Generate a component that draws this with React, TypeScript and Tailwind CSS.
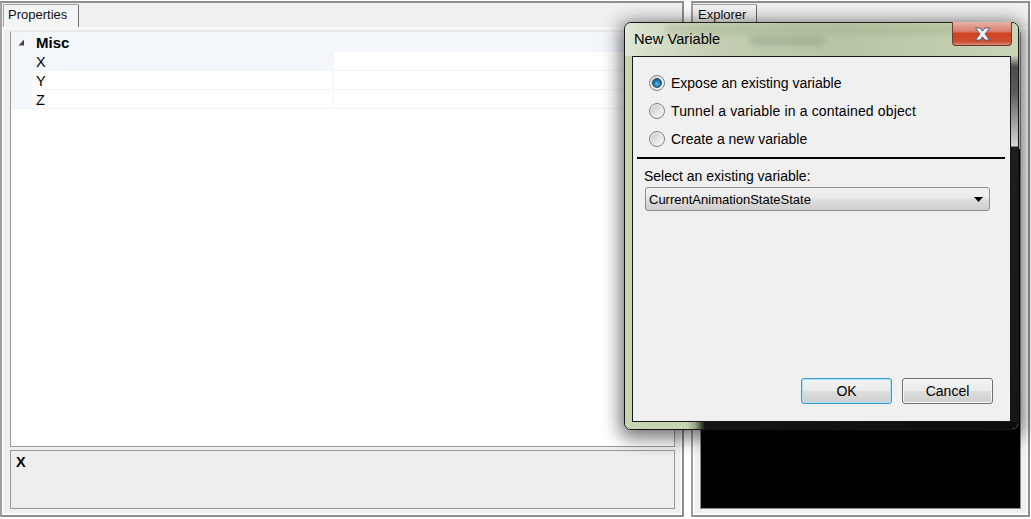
const FONT = "font-['Liberation_Sans',Arial,sans-serif]";

function TabHeader({ label, className }: { label: string; className: string }) {
  return (
    <div className={`flex h-[24px] items-start pt-[1px] ${className}`}>
      <div className="flex h-[23px] items-center rounded-t-[2px] border-t border-r border-l border-[#a0a0a0] border-r-[#6d6d6d] bg-[#f4f4f4] pb-[2px] text-[13px] text-[#111]">
        {label}
      </div>
    </div>
  );
}

function PropertyRow({ name, shaded }: { name: string; shaded?: boolean }) {
  return (
    <div className="flex h-[19px] border-b border-[#f3f5fa] bg-[#f3f6fb]">
      <div className="w-[21px] shrink-0" />
      <div
        className={`flex w-[302px] shrink-0 items-center border-r border-[#f3f5fa] pt-[4px] pl-[4px] text-[14.5px] text-black ${
          shaded ? "" : "bg-white"
        }`}
      >
        {name}
      </div>
      <div className="min-w-0 grow bg-white" />
    </div>
  );
}

function PropertiesPanel() {
  return (
    <section className="flex h-[516px] w-[684px] shrink-0 flex-col border-2 border-[#8f8f8f] border-l-[#a0a0a0] bg-[#f0f0f0]">
      <TabHeader label="Properties" className="pl-[1px] [&>div]:w-[76px] [&>div]:pl-[4px]" />
      <div className="flex min-h-0 grow flex-col border-2 border-t-2 border-[#fafafa] pt-[2px] pr-[5px] pb-[4px] pl-[6px]">
        <div className="flex min-h-0 grow flex-col border border-[#989898] border-t-[#e4e6ea] bg-white">
          <div className="flex h-[20px] items-center bg-[#f3f6fb] pt-[1px]">
            <svg viewBox="0 0 7 7" className="mr-[11px] ml-[7px] h-[7px] w-[7px]">
              <path d="M6 0.500v6H0.500z" fill="#444" />
            </svg>
            <span className="pt-[2px] text-[15px] font-bold text-black">Misc</span>
          </div>
          <PropertyRow name="X" shaded />
          <PropertyRow name="Y" />
          <PropertyRow name="Z" />
        </div>
        <div className="mt-[3px] h-[59px] shrink-0 border border-[#989898] bg-[#eeeeee] pt-[1px] pl-[5px] text-[14.5px] font-bold text-black">
          X
        </div>
      </div>
    </section>
  );
}

function ExplorerPanel() {
  return (
    <section className="ml-[7px] flex h-[516px] w-[339px] shrink-0 flex-col border-2 border-[#8f8f8f] border-l-[#a0a0a0] bg-[#f0f0f0]">
      <TabHeader label="Explorer" className="-ml-[1px] [&>div]:w-[65px] [&>div]:pl-[5px]" />
      <div className="flex min-h-0 grow flex-col border-2 border-[#fafafa] px-[5px] pt-[3px] pb-[4px]">
        <div className="flex grow flex-col border border-[#8c8c96] border-t-[#f0f0f0] bg-white">
          <div className="mt-[116px] grow bg-black" />
        </div>
      </div>
    </section>
  );
}

function Radio({ label, checked, className }: { label: string; checked?: boolean; className?: string }) {
  return (
    <label className="flex h-[16px] items-center text-[14px] text-black">
      <span className="flex h-[16px] w-[16px] shrink-0 items-center justify-center rounded-full border border-[#808080] bg-gradient-to-br from-[#c4c4c4] to-white shadow-[inset_0_0_0_1px_#f2f2f2]">
        {checked ? (
          <span className="h-[10px] w-[10px] rounded-full border border-[#23506e] bg-[radial-gradient(circle_at_50%_60%,#5cc6ee_0,#1c6fa0_55%,#134a70_100%)]" />
        ) : null}
      </span>
      <span className={`ml-[6px] ${className ?? ""}`}>{label}</span>
    </label>
  );
}

function DialogButton({ label, focused }: { label: string; focused?: boolean }) {
  return (
    <button
      type="button"
      className={`flex h-[26px] w-[91px] items-center justify-center rounded-[3px] border bg-[linear-gradient(to_bottom,#f4f4f4_0,#ebebeb_48%,#dddddd_52%,#cfcfcf_100%)] text-[14px] text-black ${
        focused ? "border-[#3c9ad0] shadow-[inset_0_0_0_1px_#a8e4f8]" : "border-[#707070] shadow-[inset_0_0_0_1px_#f8f8f8]"
      }`}
    >
      {label}
    </button>
  );
}

function NewVariableDialog() {
  return (
    <div className="absolute top-[22px] left-[624px] flex h-[408px] w-[395px] flex-col rounded-[7px] border border-[#161616] bg-[#c6d4b2] px-[7px] pb-[7px] shadow-[0_4px_18px_4px_rgba(0,0,0,0.55)]">
      {/* glass frame: what shows through it behind the client area */}
      <div className="absolute inset-x-0 top-0 h-[33px] rounded-t-[6px] bg-[linear-gradient(to_right,#dfe6d5_0,#c4cfb3_22%,#b8c5a5_55%,#c2cfae_85%,#c9d5b8_100%)]" />
      <div className="absolute inset-x-[40px] top-[2px] h-[9px] bg-[#9dac87] opacity-40 blur-[3px]" />
      <div className="absolute top-[14px] left-[125px] h-[8px] w-[75px] bg-[#6f7a62] opacity-30 blur-[3px]" />
      <div className="absolute top-[33px] right-0 bottom-[7px] w-[7px] bg-[linear-gradient(to_bottom,#c4d0b4_0,#4c4c48_3%,#5c5c5c_10%,#d4d4d4_24.500%,#1c2019_25%,#141612_100%)]" />
      <div className="absolute inset-x-0 bottom-0 h-[7px] rounded-b-[6px] bg-[linear-gradient(to_right,#c6d4b2_0,#c6d4b2_62px,#9aa88a_70px,#151515_80px,#0c0c0c_100%)]" />
      <div className="relative flex h-[33px] shrink-0 items-center pl-[2px]">
        <span className="text-[14.7px] text-black">New Variable</span>
        <div className="absolute top-[-1px] right-[-1px] flex h-[24px] w-[60px] items-center justify-center rounded-b-[4px] border border-t-0 border-[#6e3a33] bg-[linear-gradient(to_bottom,#e8b0a6_0,#d8806e_40%,#d2431f_50%,#c9502f_85%,#dd8a78_100%)]">
          <svg viewBox="0 0 17 14" className="h-[14px] w-[17px]">
            <path d="M1.500 1h4.600L8.500 4.200 10.900 1h4.600L11 7l4.500 6h-4.600L8.500 9.800 6.100 13H1.500L6 7z" fill="#f2f3f6" stroke="#4d5670" strokeWidth="0.9" />
          </svg>
        </div>
      </div>
      <div className="relative flex min-h-0 grow flex-col border border-[#161616] bg-[#f0f0f0]">
        <div className="flex flex-col gap-[12px] pt-[18px] pl-[16px]">
          <Radio label="Expose an existing variable" checked />
          <Radio label="Tunnel a variable in a contained object" className="tracking-[0.15px]" />
          <Radio label="Create a new variable" />
        </div>
        <div className="mt-[10px] mr-[5px] ml-[4px] h-[2px] bg-black" />
        <div className="mt-[10px] pl-[11px] text-[14px] leading-[15px] text-black">Select an existing variable:</div>
        <div className="mt-[3px] ml-[12px] flex h-[24px] w-[345px] items-center justify-between rounded-[3px] border border-[#8e8f8f] bg-[linear-gradient(to_bottom,#f2f2f2_0,#ebebeb_45%,#dcdcdc_55%,#cfcfcf_100%)] px-[3px] pt-[1px] text-[13px] text-black">
          <span>CurrentAnimationStateState</span>
          <svg viewBox="0 0 9 5" className="mr-[3px] h-[5px] w-[9px]">
            <path d="M0 0h9L4.500 5z" fill="#000" />
          </svg>
        </div>
        <div className="mt-auto flex justify-end gap-[10px] pr-[17px] pb-[17px]">
          <DialogButton label="OK" focused />
          <DialogButton label="Cancel" />
        </div>
      </div>
    </div>
  );
}

export default function App() {
  return (
    <div className={`relative h-[519px] w-[1031px] overflow-hidden bg-white pt-[1px] ${FONT}`}>
      <div className="flex">
        <PropertiesPanel />
        <ExplorerPanel />
      </div>
      <NewVariableDialog />
    </div>
  );
}
